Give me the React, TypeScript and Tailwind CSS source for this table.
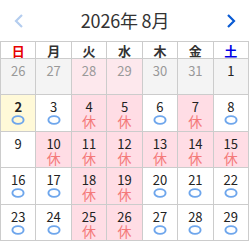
import React from 'react';

type Day = {
  n: number;
  other?: boolean; // belongs to previous month
  closed?: boolean; // 休
  open?: boolean; // ○
  today?: boolean;
};

const WEEK = ['日', '月', '火', '水', '木', '金', '土'];

const days: Day[] = [
  { n: 26, other: true },
  { n: 27, other: true },
  { n: 28, other: true, closed: true },
  { n: 29, other: true, closed: true },
  { n: 30, other: true },
  { n: 31, other: true },
  { n: 1 },
  { n: 2, open: true, today: true },
  { n: 3, open: true },
  { n: 4, closed: true },
  { n: 5, closed: true },
  { n: 6, open: true },
  { n: 7, closed: true },
  { n: 8, open: true },
  { n: 9 },
  { n: 10, closed: true },
  { n: 11, closed: true },
  { n: 12, closed: true },
  { n: 13, closed: true },
  { n: 14, closed: true },
  { n: 15, closed: true },
  { n: 16, open: true },
  { n: 17, open: true },
  { n: 18, closed: true },
  { n: 19, closed: true },
  { n: 20, open: true },
  { n: 21, open: true },
  { n: 22, open: true },
  { n: 23, open: true },
  { n: 24, open: true },
  { n: 25, closed: true },
  { n: 26, closed: true },
  { n: 27, open: true },
  { n: 28, open: true },
  { n: 29, open: true },
];

const Ring = () => (
  <svg width="14" height="10" viewBox="0 0 14 10" className="mt-[1px]">
    <ellipse cx="7" cy="5" rx="5.6" ry="3.9" fill="none" stroke="#6ea6ec" strokeWidth="1.9" />
  </svg>
);

const Chevron = ({ dir, color }: { dir: 'left' | 'right'; color: string }) => (
  <svg width="10" height="16" viewBox="0 0 10 16">
    <polyline
      points={dir === 'left' ? '8,2 2,8 8,14' : '2,2 8,8 2,14'}
      fill="none"
      stroke={color}
      strokeWidth="2.2"
    />
  </svg>
);

function cellBg(d: Day) {
  if (d.today) return 'bg-[#fff9d8]';
  if (d.closed && d.other) return 'bg-[#fde8ed]';
  if (d.closed) return 'bg-[#ffdde5]';
  if (d.other || d.n === 1) return 'bg-[#f4f4f4]';
  return 'bg-white';
}

export default function App() {
  return (
    <div className="w-[252px] h-[241px] bg-white font-['Noto_Sans_CJK_JP','Noto_Sans',sans-serif] text-[#333]">
      <div className="flex items-center justify-between h-[41px] pl-[14px] pr-[16px]">
        <Chevron dir="left" color="#b4cdef" />
        <span className="text-[18px] leading-none tracking-[-0.2px] text-[#333] pb-[1px]">2026年 8月</span>
        <Chevron dir="right" color="#0a5bd3" />
      </div>

      <div className="grid grid-cols-7 w-[249px] border-l border-t border-[#cccccc]">
        {WEEK.map((w, i) => (
          <div
            key={w}
            className={`h-[17px] flex items-center justify-center border-r border-b border-[#cccccc] text-[13px] font-bold leading-none ${
              i === 0 ? 'text-[#e60000]' : i === 6 ? 'text-[#0000e6]' : 'text-[#333]'
            }`}
          >
            {w}
          </div>
        ))}

        {days.map((d, i) => (
          <div
            key={i}
            className={`h-[36.4px] flex flex-col items-center pt-[4px] border-r border-b border-[#cccccc] ${cellBg(d)}`}
          >
            <span
              className={`text-[13px] leading-[15px] ${d.other ? 'text-[#999]' : 'text-[#222]'} ${
                d.today ? 'font-bold' : ''
              }`}
            >
              {d.n}
            </span>
            {d.open && <Ring />}
            {d.closed && !d.other && (
              <span className="text-[14px] leading-[14px] text-[#f47a7a]">休</span>
            )}
          </div>
        ))}
      </div>
    </div>
  );
}
